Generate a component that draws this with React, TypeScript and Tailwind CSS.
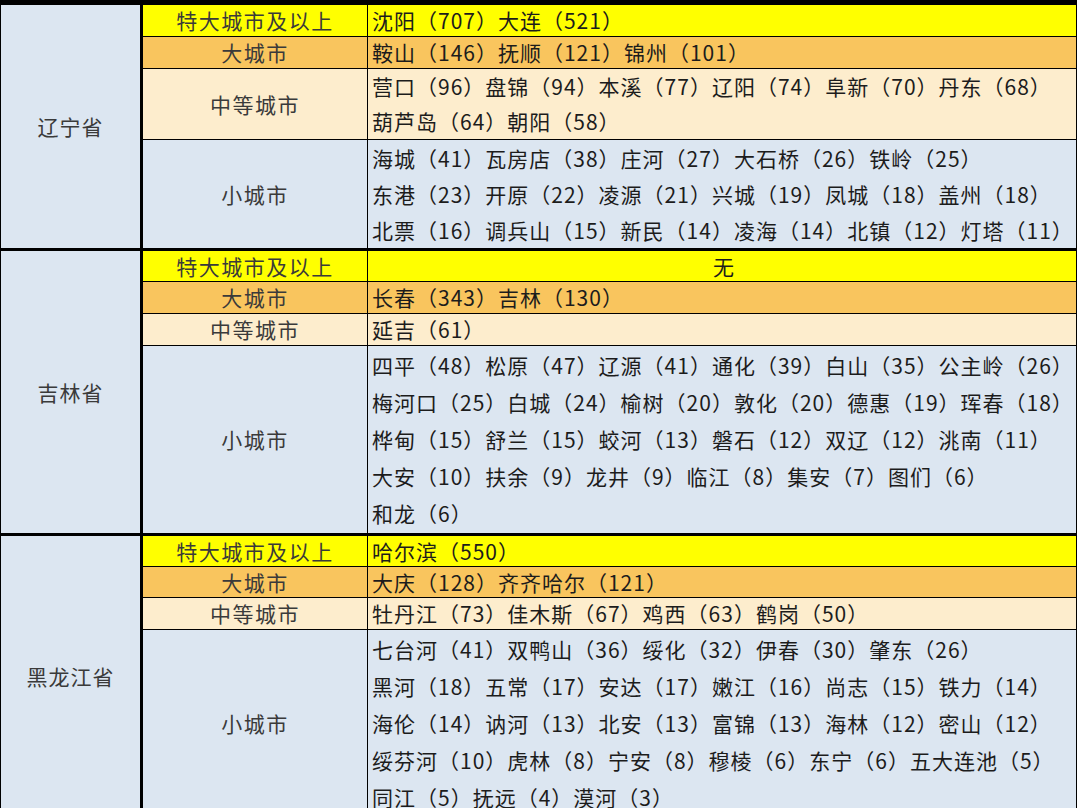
type Tone = 'yellow' | 'orange' | 'cream' | 'blue';

interface Row {
  label: string;
  tone: Tone;
  h: string;
  lines: string[];
  center?: boolean;
}

interface Section {
  province: string;
  rows: Row[];
}

const toneBg: Record<Tone, string> = {
  yellow: 'bg-[#ffff00]',
  orange: 'bg-[#f9c55e]',
  cream: 'bg-[#fdedcd]',
  blue: 'bg-[#dce6f1]',
};

const sections: Section[] = [
  {
    province: '辽宁省',
    rows: [
      { label: '特大城市及以上', tone: 'yellow', h: 'h-[32px]', lines: ['沈阳（707）大连（521）'] },
      { label: '大城市', tone: 'orange', h: 'h-[32px]', lines: ['鞍山（146）抚顺（121）锦州（101）'] },
      {
        label: '中等城市',
        tone: 'cream',
        h: 'h-[71px] leading-[35px]',
        lines: ['营口（96）盘锦（94）本溪（77）辽阳（74）阜新（70）丹东（68）', '葫芦岛（64）朝阳（58）'],
      },
      {
        label: '小城市',
        tone: 'blue',
        h: 'h-[108px] leading-[36px]',
        lines: [
          '海城（41）瓦房店（38）庄河（27）大石桥（26）铁岭（25）',
          '东港（23）开原（22）凌源（21）兴城（19）凤城（18）盖州（18）',
          '北票（16）调兵山（15）新民（14）凌海（14）北镇（12）灯塔（11）',
        ],
      },
    ],
  },
  {
    province: '吉林省',
    rows: [
      { label: '特大城市及以上', tone: 'yellow', h: 'h-[31px]', lines: ['无'], center: true },
      { label: '大城市', tone: 'orange', h: 'h-[32px]', lines: ['长春（343）吉林（130）'] },
      { label: '中等城市', tone: 'cream', h: 'h-[32px]', lines: ['延吉（61）'] },
      {
        label: '小城市',
        tone: 'blue',
        h: 'h-[187px] leading-[37px]',
        lines: [
          '四平（48）松原（47）辽源（41）通化（39）白山（35）公主岭（26）',
          '梅河口（25）白城（24）榆树（20）敦化（20）德惠（19）珲春（18）',
          '桦甸（15）舒兰（15）蛟河（13）磐石（12）双辽（12）洮南（11）',
          '大安（10）扶余（9）龙井（9）临江（8）集安（7）图们（6）',
          '和龙（6）',
        ],
      },
    ],
  },
  {
    province: '黑龙江省',
    rows: [
      { label: '特大城市及以上', tone: 'yellow', h: 'h-[31px]', lines: ['哈尔滨（550）'] },
      { label: '大城市', tone: 'orange', h: 'h-[31px]', lines: ['大庆（128）齐齐哈尔（121）'] },
      { label: '中等城市', tone: 'cream', h: 'h-[32px]', lines: ['牡丹江（73）佳木斯（67）鸡西（63）鹤岗（50）'] },
      {
        label: '小城市',
        tone: 'blue',
        h: 'h-[187px] leading-[37px]',
        lines: [
          '七台河（41）双鸭山（36）绥化（32）伊春（30）肇东（26）',
          '黑河（18）五常（17）安达（17）嫩江（16）尚志（15）铁力（14）',
          '海伦（14）讷河（13）北安（13）富锦（13）海林（12）密山（12）',
          '绥芬河（10）虎林（8）宁安（8）穆棱（6）东宁（6）五大连池（5）',
          '同江（5）抚远（4）漠河（3）',
        ],
      },
    ],
  },
];

function CityRow({ row, last }: { row: Row; last: boolean }) {
  return (
    <div className={`flex ${row.h} ${toneBg[row.tone]} ${last ? '' : 'border-b border-black'}`}>
      <div className="w-[225px] shrink-0 border-r border-black flex items-center justify-center text-[#3a3a3a] tracking-[1.5px]">
        {row.label}
      </div>
      <div
        className={`flex-1 flex flex-col justify-center pl-[4px] text-[#1c1c1c] ${
          row.center ? 'items-center' : 'items-start'
        }`}
      >
        {row.lines.map((line) => (
          <div key={line} className="whitespace-nowrap">
            {line}
          </div>
        ))}
      </div>
    </div>
  );
}

export default function App() {
  return (
    <div className="h-[808px] w-[1080px] overflow-hidden bg-white font-['Noto_Sans_CJK_SC','Noto_Sans',sans-serif] text-[21px] leading-none tracking-[1px]">
      <div className="w-[1077px] border-t-[5px] border-l border-r border-black">
        {sections.map((section) => (
          <section key={section.province} className="flex border-b-[3px] border-black">
            <div className="w-[142px] shrink-0 border-r-[3px] border-black bg-[#dce6f1] flex items-center justify-center text-[#3a3a3a]">
              {section.province}
            </div>
            <div className="flex-1 flex flex-col">
              {section.rows.map((row, i) => (
                <CityRow key={row.label} row={row} last={i === section.rows.length - 1} />
              ))}
            </div>
          </section>
        ))}
      </div>
    </div>
  );
}
